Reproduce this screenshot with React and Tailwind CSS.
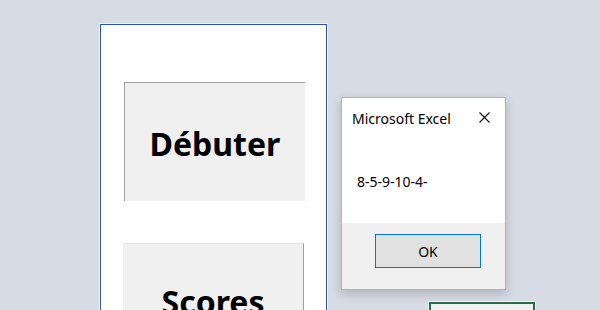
export default function App() {
  return (
    <div className="w-[600px] h-[310px] overflow-hidden bg-[#d6dbe4] flex items-start font-['Noto_Sans',sans-serif]">
      {/* user form */}
      <div className="ml-[100px] mt-[24px] w-[227px] h-[300px] shrink-0 bg-white border border-[#2b579a] shadow-[0_0_0_1px_#eef1f6] pl-[23px] pt-[57px]">
        <div className="w-[181px] h-[119px] bg-[#f0f0f0] border-t border-l border-[#a0a0a0] flex items-center justify-center">
          <span className="text-[32px] font-bold text-black leading-none pt-[3px]">Débuter</span>
        </div>
        <div className="mt-[42px] -ml-px w-[181px] h-[119px] bg-[#f0f0f0] border-t border-r border-t-[#e3e3e3] border-r-[#a0a0a0] flex justify-center pt-[42px]">
          <span className="text-[32px] font-bold text-black leading-none">Scores</span>
        </div>
      </div>

      <div className="ml-[14px] flex flex-col items-start">
        {/* message box */}
        <div className="mt-[97px] w-[165px] h-[193px] bg-white border border-[#9fcd6e] shadow-[0_4px_10px_rgba(0,0,0,0.18)] flex flex-col">
          <div className="flex items-center justify-between pl-[10px] pr-[15px] pt-[2px] h-[38px]">
            <span className="text-[14px] text-black">Microsoft Excel</span>
            <svg width="11" height="11" viewBox="0 0 11 11" className="mt-[-1px]">
              <path d="M0.5 0.5 L10.5 10.5 M10.5 0.5 L0.5 10.5" stroke="#111" strokeWidth="1.1" />
            </svg>
          </div>
          <div className="flex-1 pl-[15px] pt-[33px]">
            <span className="text-[14px] text-black">8-5-9-10-4-</span>
          </div>
          <div className="h-[66px] bg-[#f0f0f0] pl-[33px] pt-[11px]">
            <div className="w-[106px] h-[34px] bg-[#e1e1e1] border border-[#0078d7] flex items-center justify-center">
              <span className="text-[14px] text-black">OK</span>
            </div>
          </div>
        </div>

        {/* sheet control */}
        <div className="ml-[88px] mt-[12px] w-[106px] h-[30px] bg-[#f0f0f0] border-2 border-[#217346] shadow-[0_0_0_1px_#eef1f6]"></div>
      </div>
    </div>
  )
}
